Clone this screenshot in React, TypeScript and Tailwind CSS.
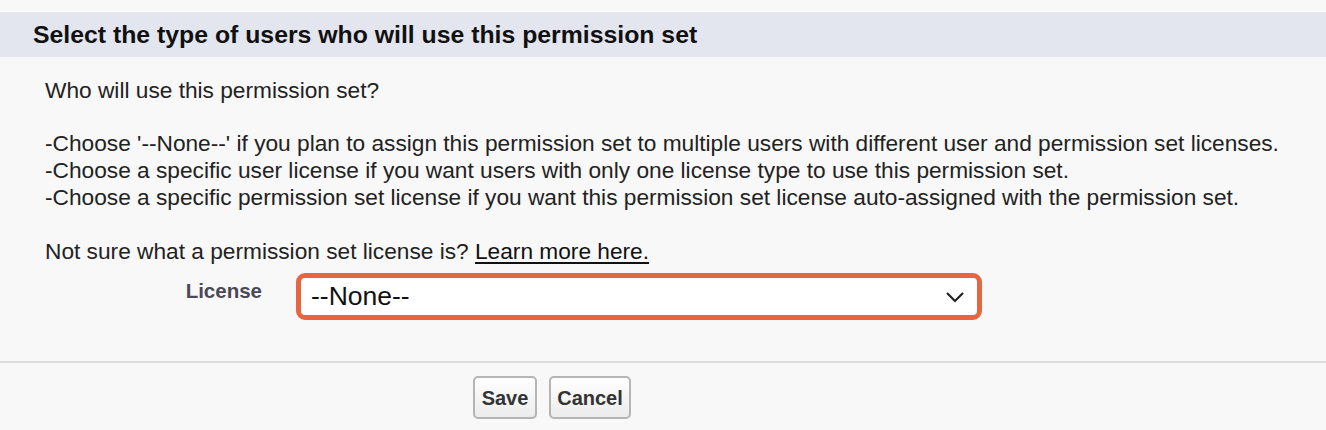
import React from 'react';

const App: React.FC = () => {
  return (
    <div className="w-[1326px] h-[430px] bg-[#f8f8f8] overflow-hidden" style={{ fontFamily: '"Liberation Sans", Arial, sans-serif' }}>
      {/* Top strip */}
      <div className="h-[12px] border-b border-white" />

      {/* Section header */}
      <div className="h-[45px] bg-[#e3e6ef] flex items-center pl-[33px]">
        <h2 className="text-[24.8px] font-bold text-[#111]">
          Select the type of users who will use this permission set
        </h2>
      </div>

      {/* Body */}
      <div className="pl-[45px] pt-[20px] text-[22.7px] leading-[27px] text-[#222]">
        <p>Who will use this permission set?</p>
        <p className="mt-[26px]">
          -Choose '--None--' if you plan to assign this permission set to multiple users with different user and permission set licenses.
          <br />
          -Choose a specific user license if you want users with only one license type to use this permission set.
          <br />
          -Choose a specific permission set license if you want this permission set license auto-assigned with the permission set.
        </p>
        <p className="mt-[27px]">
          Not sure what a permission set license is?{' '}
          <a href="#" className="underline underline-offset-[3px] decoration-[2px] text-[#111]">
            Learn more here.
          </a>
        </p>
      </div>

      {/* License row */}
      <div className="flex items-start mt-[8px]">
        <label className="w-[262px] text-right pt-[3px] text-[20.5px] font-bold text-[#4a4a56]">License</label>
        <div className="ml-[34px] w-[686px] h-[47px] border-[5px] border-[#e8663f] rounded-[9px] bg-white flex items-center justify-between pl-[10px] pr-[12px]">
          <span className="text-[26.5px] text-[#111]">--None--</span>
          <svg width="20" height="12" viewBox="0 0 20 12" fill="none" stroke="#222" strokeWidth="2.2">
            <path d="M2 2 L10 10 L18 2" />
          </svg>
        </div>
      </div>

      {/* Divider */}
      <div className="mt-[41px] h-[2px] bg-[#dbdbdb]" />

      {/* Buttons */}
      <div className="flex gap-[12px] pl-[473px] pt-[13px]">
        <button className="w-[64px] h-[43px] rounded-[5px] border-2 border-[#b5b5b5] bg-gradient-to-b from-white to-[#ececec] text-[20px] font-bold text-[#333]">
          Save
        </button>
        <button className="w-[82px] h-[43px] rounded-[5px] border-2 border-[#b5b5b5] bg-gradient-to-b from-white to-[#ececec] text-[20px] font-bold text-[#333]">
          Cancel
        </button>
      </div>
    </div>
  );
};

export default App;
